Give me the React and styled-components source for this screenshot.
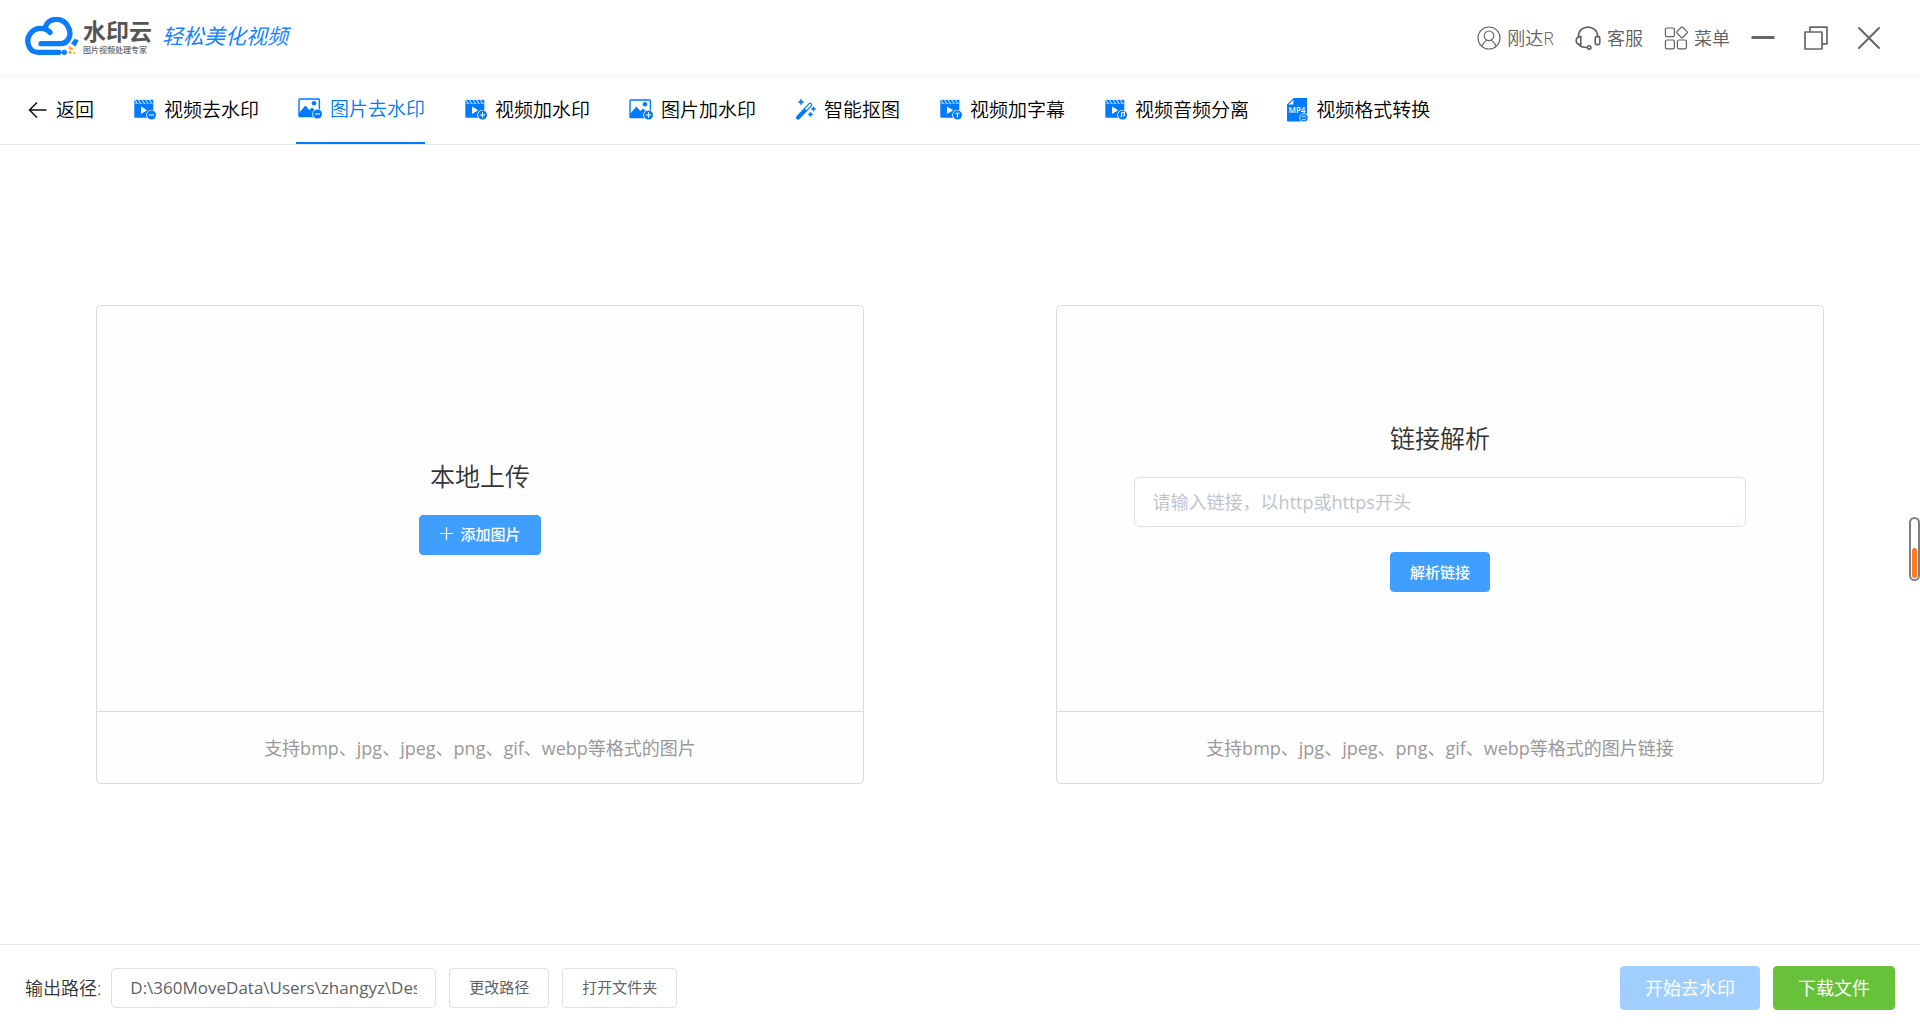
import React, { useState } from 'react';
import styled, { createGlobalStyle, css } from 'styled-components';

const GlobalStyle = createGlobalStyle`
  * {
    box-sizing: border-box;
  }

  body {
    margin: 0;
    background: #fff;
    color: #333;
    font-family: 'Open Sans', 'Noto Sans CJK SC', sans-serif;
    font-weight: 350;
  }

  button,
  input {
    font-family: inherit;
    font-weight: inherit;
  }
`;

const Page = styled.div`
  display: flex;
  flex-direction: column;
  min-height: 100vh;
`;

const Header = styled.header`
  display: flex;
  align-items: center;
  justify-content: space-between;
  height: 75px;
  padding: 0 39px 0 25px;
  box-shadow: 0 1px 6px rgba(0, 0, 0, 0.06);
`;

const Brand = styled.div`
  display: flex;
  align-items: center;
  padding-bottom: 3px;
`;

const BrandText = styled.div`
  display: flex;
  flex-direction: column;
  margin-left: 4px;
  color: #555;
`;

const BrandName = styled.span`
  font-size: 23px;
  font-weight: 700;
  line-height: 28px;
`;

const BrandNote = styled.span`
  color: #666;
  font-size: 8px;
  font-weight: 500;
  line-height: 10px;
`;

const Slogan = styled.span`
  margin-left: 10px;
  color: #1583ff;
  font-size: 21px;
  font-style: italic;
  font-weight: 400;
  line-height: 28px;
`;

const HeaderActions = styled.div`
  display: flex;
  align-items: center;
  gap: 21px;
`;

const PlainButton = styled.button`
  display: flex;
  align-items: center;
  padding: 0;
  border: 0;
  background: none;
  cursor: pointer;
`;

const HeaderButton = styled(PlainButton)`
  gap: 6px;
  color: #606060;
  font-size: 18px;
  line-height: 24px;
`;

const WindowButtons = styled.div`
  display: flex;
  align-items: center;
  gap: 29px;
  color: #666;
`;

const WindowButton = styled(PlainButton)`
  color: inherit;
`;

const Nav = styled.nav`
  display: flex;
  gap: 37px;
  height: 70px;
  padding: 0 25px;
  border-bottom: 1px solid #e6e6e6;
`;

const NavItem = styled(PlainButton)`
  gap: 8px;
  color: #000;
  font-size: 19px;
  line-height: 26px;
  white-space: nowrap;

  ${({ $active }) => $active && css`
    border-bottom: 2px solid #007aff;
    color: #007aff;
  `}
`;

const Main = styled.main`
  display: flex;
  flex: 1;
  align-items: center;
  justify-content: space-between;
  padding: 0 5%;
`;

const Panel = styled.section`
  display: flex;
  flex-direction: column;
  width: 44.445%;
  height: 479px;
  border: 1px solid #dcdcdc;
  border-radius: 5px;
  background: #fefefe;
`;

const PanelBody = styled.div`
  display: flex;
  flex: 1;
  flex-direction: column;
  align-items: center;
  justify-content: center;
  gap: 24px;
  padding-bottom: 2px;
`;

const PanelTitle = styled.h2`
  margin: 0;
  color: #333;
  font-size: 25px;
  font-weight: inherit;
  line-height: 30px;
`;

const PanelNote = styled.p`
  margin: 0;
  padding: 22px 0 21px;
  border-top: 1px solid #dcdcdc;
  color: #999;
  font-size: 18px;
  font-weight: 400;
  line-height: 28px;
  text-align: center;
`;

const TextInput = styled.input`
  padding: 0 18px;
  border: 1px solid #dcdfe6;
  border-radius: 5px;
  background: #fff;
  color: #606266;
  font-weight: 400;
  outline: none;

  &::placeholder {
    color: #c0c4cc;
    opacity: 1;
  }
`;

const LinkInput = styled(TextInput)`
  width: 80%;
  height: 50px;
  margin-bottom: 1px;
  font-size: 18px;
`;

const PathInput = styled(TextInput)`
  width: 325px;
  height: 40px;
  font-size: 17px;
`;

const Button = styled.button`
  display: flex;
  align-items: center;
  gap: 6px;
  height: 40px;
  padding: 0 19px 2px;
  border: 1px solid #dcdfe6;
  border-radius: 4px;
  background: #fff;
  color: #606266;
  font-size: 15px;
  font-weight: 400;
  cursor: pointer;
`;

const PrimaryButton = styled(Button)`
  border-color: #409eff;
  background: #409eff;
  color: #fff;
  font-weight: 500;
`;

const BigButton = styled(Button)`
  height: 44px;
  padding: 0 24px 2px;
  border-color: ${({ $color }) => $color};
  background: ${({ $color }) => $color};
  color: #fff;
  font-size: 18px;
`;

const Footer = styled.footer`
  display: flex;
  align-items: center;
  justify-content: space-between;
  height: 86px;
  padding: 0 25px;
  border-top: 1px solid #e6e6e6;
`;

const FooterGroup = styled.div`
  display: flex;
  align-items: center;
  gap: 13px;
`;

const PathField = styled.div`
  display: flex;
  align-items: center;
  gap: 10px;
`;

const PathLabel = styled.label`
  color: #333;
  font-size: 18px;
  line-height: 24px;
`;

const Gauge = styled.div`
  position: fixed;
  top: calc(50% + 2px);
  right: 0;
  display: flex;
  align-items: flex-end;
  width: 11px;
  height: 64px;
  padding: 1px;
  border: 2px solid #808080;
  border-radius: 6px;
  background: #fff;
`;

const GaugeFill = styled.div`
  width: 100%;
  height: 30px;
  border-radius: 3px;
  background: #ff7a21;
`;

function Logo() {
  return (
    <svg width="54" height="38" viewBox="75 51 162 114" fill="none" aria-hidden="true">
      <g stroke="#0a7dff" strokeWidth="16" strokeLinecap="round">
        <path d="M150 97 C135 81 108 81 93 98 C74 120 85 157 115 157 H177" />
        <path d="M137 79 C147 52 186 52 202 76 C219 103 206 131 180 131 H123" />
      </g>
      <circle cx="193" cy="157" r="8" fill="#0a7dff" />
      <path d="M213 130 L224 116 L236 121 L226 140 Z" fill="#0a7dff" />
      <path d="M207 138 L221 146 L215 151 L205 146 Z" fill="#ffa31a" />
      <circle cx="210" cy="157" r="5" fill="#ffa31a" />
      <circle cx="223" cy="158" r="3" fill="#ffa31a" />
    </svg>
  );
}

function BackIcon() {
  return (
    <svg width="23" height="24" viewBox="0 0 23 24" fill="none" stroke="#111" strokeWidth="1.5">
      <path d="M4.5 12 H21.5 M12 4.5 L4.5 12 L12 19.5" />
    </svg>
  );
}

const badgeMarks = {
  minus: <path d="M18 17h5" />,
  plus: <path d="M17.8 17h5.4M20.5 14.3v5.4" />,
  text: <path d="M18.4 15.2h4.2M20.5 15.2v4.3" />,
  music: <path d="M19.6 18.6v-3.7l2.8-.7v3.6M18.4 18.7h1.2M21.2 17.9h1.2" />,
};

function Badge({ mark }) {
  return (
    <>
      <circle cx="20.3" cy="17" r="5.1" fill="#fff" />
      <circle cx="20.5" cy="17" r="4.5" fill="#007aff" />
      <g stroke="#fff" strokeWidth="1.1" fill="none">{badgeMarks[mark]}</g>
    </>
  );
}

function VideoIcon({ mark }) {
  return (
    <svg width="25" height="24" viewBox="0 0 25 24">
      <path d="M3.3 1.8h19v3.8h-19z" fill="#007aff" />
      <path d="M3.6 1.4l3 4.6M7.2 1.4l3 4.6M10.8 1.4l3 4.6M14.4 1.4l3 4.6M18 1.4l3 4.6" stroke="#fff" strokeWidth="0.9" />
      <path d="M3.3 5.8h19v14h-18q-1 0-1-1z" fill="#007aff" />
      <path d="M10 8.6v7.4l6.2-3.7z" fill="#fff" />
      <Badge mark={mark} />
    </svg>
  );
}

function PictureIcon({ mark }) {
  return (
    <svg width="26" height="24" viewBox="-1 0 26 24">
      <rect x="2" y="2" width="20.4" height="17.6" rx="0.8" fill="none" stroke="#007aff" strokeWidth="1.4" />
      <path d="M2 16 L8.4 8.5 L12.3 13 L15 10.5 L22 17 V19.8 H2z" fill="#007aff" />
      <circle cx="17" cy="6.3" r="2.3" fill="#007aff" />
      <Badge mark={mark} />
    </svg>
  );
}

function WandIcon() {
  return (
    <svg width="23" height="24" viewBox="0 0 23 24">
      <path d="M5 19.6 L17.2 6.8" stroke="#007aff" strokeWidth="4.2" strokeLinecap="round" />
      <path d="M13.3 10.9 L17.2 6.8" stroke="#fff" strokeWidth="2" strokeLinecap="round" />
      <g fill="#007aff">
        <path d="M8 1 Q8.4 3.6 11 4 Q8.4 4.4 8 7 Q7.6 4.4 5 4 Q7.6 3.6 8 1z" stroke="#007aff" strokeWidth="0.5" />
        <path d="M20.5 8.6 Q20.9 10.6 23 11 Q20.9 11.4 20.5 13.4 Q20.1 11.4 18 11 Q20.1 10.6 20.5 8.6z" stroke="#007aff" strokeWidth="0.5" />
        <path d="M17.5 14 Q17.9 16 20 16.4 Q17.9 16.8 17.5 18.8 Q17.1 16.8 15 16.4 Q17.1 16 17.5 14z" stroke="#007aff" strokeWidth="0.5" />
      </g>
    </svg>
  );
}

const Mp4Text = styled.text`
  fill: #fff;
  font-family: 'Open Sans', sans-serif;
  font-size: 8px;
  font-weight: 600;
`;

function Mp4Icon() {
  return (
    <svg width="22" height="24" viewBox="0 0 22 24">
      <path d="M7.6 0H21v23.4H2Q1 23.4 1 22.4V6.6z" fill="#007aff" />
      <path d="M2.6 6.6h4.8V1.8z" fill="#fff" />
      <Mp4Text x="11" y="14.6" textAnchor="middle">MP4</Mp4Text>
      <circle cx="18" cy="19.8" r="4.6" fill="#fff" />
      <circle cx="18" cy="19.8" r="3.8" fill="#007aff" />
      <path d="M16 19.4a2.2 2.2 0 0 1 3.8-.6M20 20.4a2.2 2.2 0 0 1-3.8.5" fill="none" stroke="#fff" strokeWidth="0.9" />
    </svg>
  );
}

function UserIcon() {
  return (
    <svg width="24" height="24" viewBox="0 0 24 24" fill="none" stroke="currentColor" strokeWidth="1.1">
      <circle cx="12" cy="12" r="11" />
      <circle cx="12" cy="9.8" r="4.8" />
      <path d="M4.9 20.3 Q7 15.4 10 14.2 M19.1 20.3 Q17 15.4 14 14.2" />
    </svg>
  );
}

function HeadsetIcon() {
  return (
    <svg width="26" height="24" viewBox="0 0 26 24" fill="none" stroke="currentColor" strokeWidth="1.6">
      <path d="M3.4 10.5 C3.4 -2 22.6 -2 22.6 10.5" />
      <path d="M5.8 10.6 V18.6 Q1.2 18.6 1.2 14.6 Q1.2 10.6 5.8 10.6z" />
      <rect x="20.2" y="10.6" width="4.6" height="8" rx="1.6" />
      <path d="M4 18.6 Q5.5 21.4 12.3 21.5" />
      <circle cx="14.2" cy="21.4" r="1.7" />
    </svg>
  );
}

function MenuIcon() {
  return (
    <svg width="24" height="24" viewBox="0 0 24 24" fill="none" stroke="currentColor" strokeWidth="1.2">
      <rect x="1.4" y="2" width="9" height="8.6" rx="1.6" />
      <rect x="1.4" y="14" width="9" height="8.8" rx="1.6" />
      <rect x="13.4" y="14" width="9" height="8.8" rx="1.6" />
      <path d="M17.1 1.4 Q18 0.6 18.9 1.4 L23 5.6 Q23.6 6.4 23 7.2 L18.9 11.2 Q18 12 17.1 11.2 L13 7.2 Q12.4 6.4 13 5.6z" />
    </svg>
  );
}

function MinimizeIcon() {
  return (
    <svg width="24" height="24" viewBox="0 0 24 24" stroke="currentColor" strokeWidth="3">
      <path d="M0.5 11.5 H23.5" />
    </svg>
  );
}

function RestoreIcon() {
  return (
    <svg width="24" height="24" viewBox="0 0 24 24" fill="none" stroke="currentColor" strokeWidth="1.7" strokeLinejoin="round">
      <rect x="1" y="6" width="17" height="17" />
      <path d="M6 6 V1.2 H23 V17.8 H18" />
    </svg>
  );
}

function CloseIcon() {
  return (
    <svg width="24" height="24" viewBox="0 0 24 24" stroke="currentColor" strokeWidth="2" strokeLinecap="round">
      <path d="M2 2 L22 22 M22 2 L2 22" />
    </svg>
  );
}

function PlusIcon() {
  return (
    <svg width="15" height="15" viewBox="0 0 15 15" stroke="currentColor" strokeWidth="1.2">
      <path d="M1 7.5 H14 M7.5 1 V14" />
    </svg>
  );
}

const tools = [
  { name: '视频去水印', icon: <VideoIcon mark="minus" /> },
  { name: '图片去水印', icon: <PictureIcon mark="minus" /> },
  { name: '视频加水印', icon: <VideoIcon mark="plus" /> },
  { name: '图片加水印', icon: <PictureIcon mark="plus" /> },
  { name: '智能抠图', icon: <WandIcon /> },
  { name: '视频加字幕', icon: <VideoIcon mark="text" /> },
  { name: '视频音频分离', icon: <VideoIcon mark="music" /> },
  { name: '视频格式转换', icon: <Mp4Icon /> },
];

function App() {
  const [activeTool, setActiveTool] = useState('图片去水印');
  const [link, setLink] = useState('');

  return (
    <Page>
      <GlobalStyle />
      <Header>
        <Brand>
          <Logo />
          <BrandText>
            <BrandName>水印云</BrandName>
            <BrandNote>图片视频处理专家</BrandNote>
          </BrandText>
          <Slogan>轻松美化视频</Slogan>
        </Brand>
        <HeaderActions>
          <HeaderButton>
            <UserIcon />
            刚达R
          </HeaderButton>
          <HeaderButton>
            <HeadsetIcon />
            客服
          </HeaderButton>
          <HeaderButton>
            <MenuIcon />
            菜单
          </HeaderButton>
          <WindowButtons>
            <WindowButton aria-label="最小化"><MinimizeIcon /></WindowButton>
            <WindowButton aria-label="还原"><RestoreIcon /></WindowButton>
            <WindowButton aria-label="关闭"><CloseIcon /></WindowButton>
          </WindowButtons>
        </HeaderActions>
      </Header>
      <Nav>
        <NavItem>
          <BackIcon />
          返回
        </NavItem>
        {
          tools.map(({ name, icon }) => (
            <NavItem key={name} $active={name === activeTool} onClick={() => setActiveTool(name)}>
              {icon}
              {name}
            </NavItem>
          ))
        }
      </Nav>
      <Main>
        <Panel>
          <PanelBody>
            <PanelTitle>本地上传</PanelTitle>
            <PrimaryButton>
              <PlusIcon />
              添加图片
            </PrimaryButton>
          </PanelBody>
          <PanelNote>支持bmp、jpg、jpeg、png、gif、webp等格式的图片</PanelNote>
        </Panel>
        <Panel>
          <PanelBody>
            <PanelTitle>链接解析</PanelTitle>
            <LinkInput
              aria-label="链接"
              placeholder="请输入链接，以http或https开头"
              value={link}
              onChange={(event) => setLink(event.target.value)}
            />
            <PrimaryButton>解析链接</PrimaryButton>
          </PanelBody>
          <PanelNote>支持bmp、jpg、jpeg、png、gif、webp等格式的图片链接</PanelNote>
        </Panel>
      </Main>
      <Footer>
        <FooterGroup>
          <PathField>
            <PathLabel htmlFor="output-path">输出路径:</PathLabel>
            <PathInput id="output-path" readOnly value="D:\360MoveData\Users\zhangyz\Desktop" />
          </PathField>
          <Button>更改路径</Button>
          <Button>打开文件夹</Button>
        </FooterGroup>
        <FooterGroup>
          <BigButton $color="#a0cfff">开始去水印</BigButton>
          <BigButton $color="#67c23a">下载文件</BigButton>
        </FooterGroup>
      </Footer>
      <Gauge>
        <GaugeFill />
      </Gauge>
    </Page>
  );
}

export default App;
